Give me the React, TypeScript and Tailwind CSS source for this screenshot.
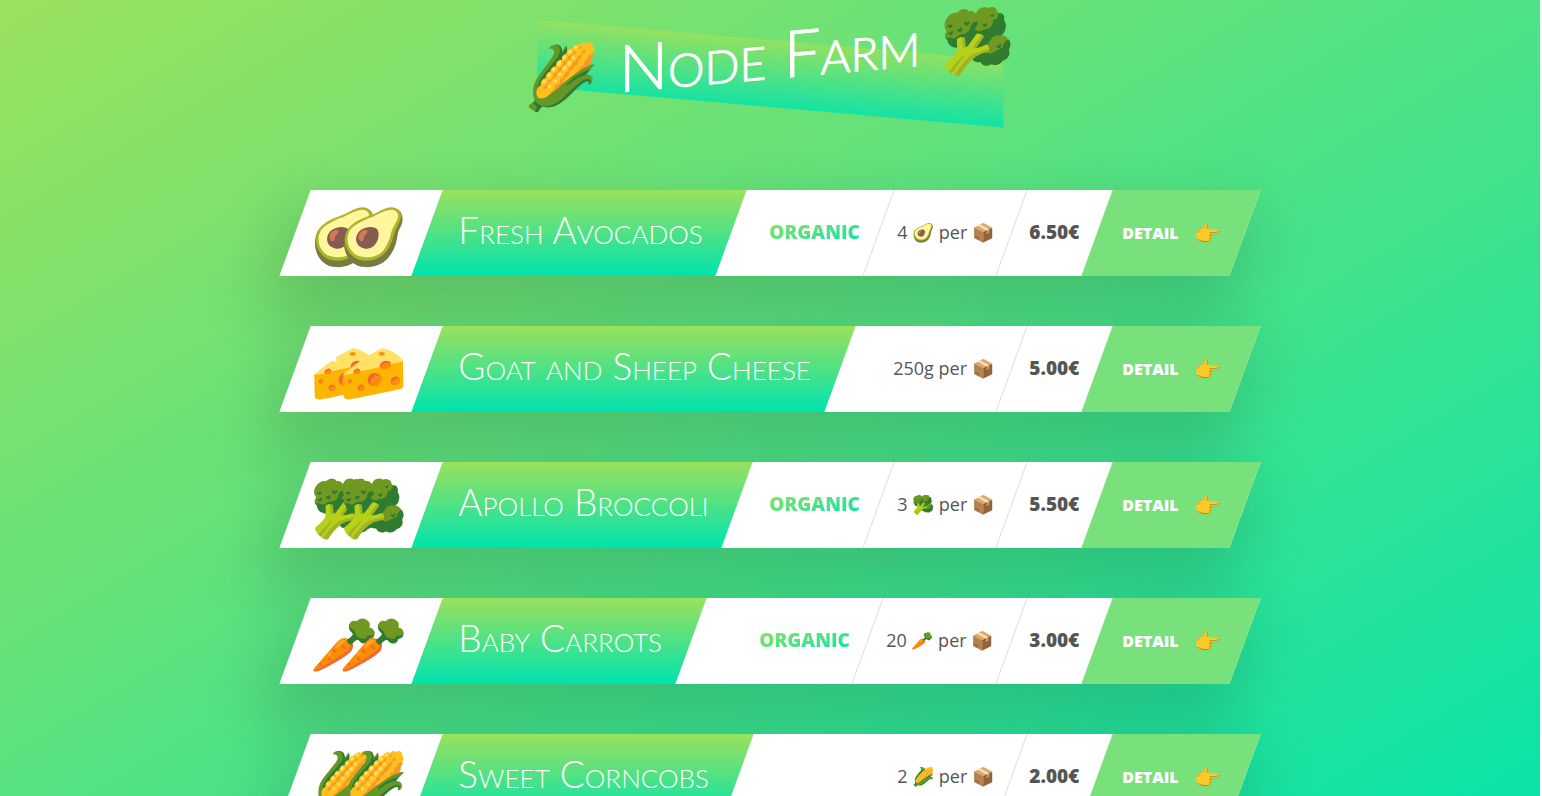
type Product = {
  name: string;
  emoji: string;
  organic: boolean;
  quantity: string;
  price: string;
};

const products: Product[] = [
  { name: "Fresh Avocados", emoji: "🥑", organic: true, quantity: "4 🥑", price: "6.50€" },
  { name: "Goat and Sheep Cheese", emoji: "🧀", organic: false, quantity: "250g", price: "5.00€" },
  { name: "Apollo Broccoli", emoji: "🥦", organic: true, quantity: "3 🥦", price: "5.50€" },
  { name: "Baby Carrots", emoji: "🥕", organic: true, quantity: "20 🥕", price: "3.00€" },
  { name: "Sweet Corncobs", emoji: "🌽", organic: false, quantity: "2 🌽", price: "2.00€" },
];

function Card({ product }: { product: Product }) {
  return (
    <article className="flex h-[86px] -skew-x-[20deg] bg-white shadow-[0_30px_60px_10px_rgba(0,0,0,0.15)]">
      <div className="flex w-[132px] shrink-0 items-center pt-0.5 pl-4" aria-hidden="true">
        <div className="flex skew-x-[20deg] text-[55px] leading-none">
          <span>{product.emoji}</span>
          <span className="-ml-[39px]">{product.emoji}</span>
        </div>
      </div>
      <div className="mr-auto flex items-center bg-linear-to-b/srgb from-[#9be15d] to-[#00e3ae] px-[30px] pb-2">
        <h2 className="skew-x-[20deg] font-['Lato',sans-serif] text-[37px] leading-none font-light whitespace-nowrap text-white [font-variant-caps:small-caps]">
          {product.name}
        </h2>
      </div>
      <div className="flex pb-0.5 whitespace-nowrap">
        {product.organic && (
          <div className="-mb-0.5 flex items-center border-r border-[#ddd] px-[18px] pb-0.5">
            <p className="skew-x-[20deg] bg-linear-to-br/srgb from-[#9be15d] to-[#00e3ae] bg-clip-text text-[19px] font-extrabold text-transparent uppercase">
              Organic
            </p>
          </div>
        )}
        <div className="-mb-0.5 flex items-center border-r border-[#ddd] px-[18px] pb-0.5">
          <p className="skew-x-[20deg] text-[18px]">{product.quantity} per 📦</p>
        </div>
        <div className="flex items-center px-[17px]">
          <p className="skew-x-[20deg] text-[19px] font-extrabold">{product.price}</p>
        </div>
      </div>
      <a href="#" className="flex items-center bg-[#79e17b] px-[25px] pb-0.5 text-base font-extrabold text-white uppercase">
        <span className="flex skew-x-[20deg] items-center gap-[15px]">
          Detail <span className="text-[22px]">👉</span>
        </span>
      </a>
    </article>
  );
}

export default function App() {
  return (
    <div className="bg-white pr-0.5">
      <div className="min-h-screen overflow-hidden bg-linear-to-br/srgb from-[#9be15d] to-[#00e3ae] px-10 pt-2 pb-[100px] font-['Open_Sans',sans-serif] text-[#555]">
        <div className="mx-auto max-w-[950px]">
          <header className="relative isolate mb-20 flex h-[102px] items-center justify-center">
            <div className="absolute top-8 left-1/2 -z-10 h-[67px] w-[49%] -translate-x-1/2 skew-y-[5deg] bg-linear-to-b/srgb from-[#9be15d] to-[#00e3ae] opacity-80" />
            <h1 className="flex -skew-y-[5deg] items-center gap-5 pb-1.5 font-['Lato',sans-serif] text-[60px] leading-none font-light whitespace-nowrap text-white">
              <span>🌽</span>
              <span className="pb-1 text-[65px] [-webkit-text-stroke:1px_white] [font-variant-caps:small-caps]">
                Node Farm
              </span>
              <span>🥦</span>
            </h1>
          </header>
          <main className="flex flex-col gap-[50px]">
            {products.map((product) => (
              <Card key={product.name} product={product} />
            ))}
          </main>
        </div>
      </div>
    </div>
  );
}
